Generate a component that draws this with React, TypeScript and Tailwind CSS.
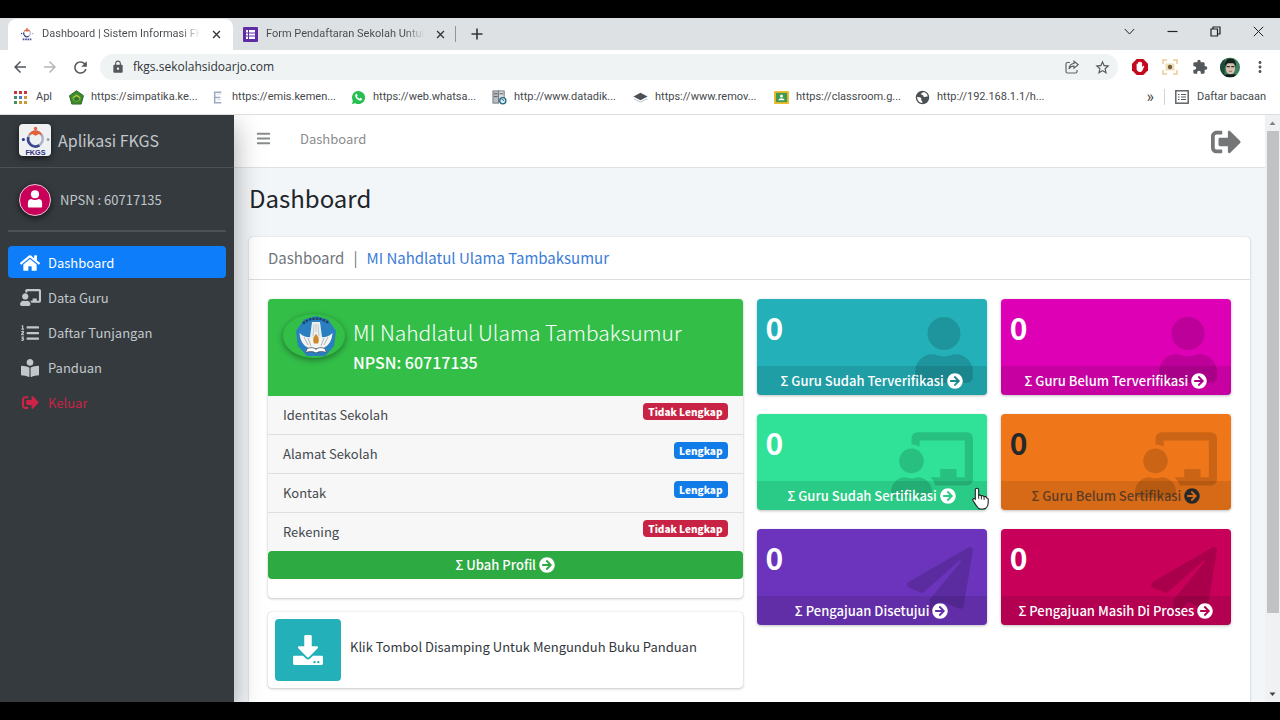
import type { ReactNode } from "react";
import {
  FaArrowCircleRight,
  FaBars,
  FaBookReader,
  FaChalkboardTeacher,
  FaDownload,
  FaHome,
  FaListOl,
  FaPaperPlane,
  FaSignOutAlt,
  FaUser,
} from "react-icons/fa";
import {
  MdArrowBack,
  MdArrowForward,
  MdExtension,
  MdLock,
  MdMoreVert,
  MdRefresh,
  MdStarBorder,
} from "react-icons/md";

/* ---------- drawings ---------- */

function FkgsMark({ className, label = true }: { className: string; label?: boolean }) {
  return (
    <svg viewBox="0 0 32 32" className={className} aria-hidden="true">
      <circle cx="16" cy="14.500" r="7.500" fill="none" stroke="#a9b0c4" strokeWidth="2.400" />
      <path d="M8.600 12.500a7.500 7.500 0 0 0 2 7.500A7.500 7.500 0 0 0 20 21" fill="none" stroke="#3c478f" strokeWidth="2.800" />
      <path d="M8.500 10.500C10.500 7 13 5.400 16 5.400s5.500 1.600 7.500 5.100l-4-1.200L16 11l-3.500-1.700z" fill="#e2603a" />
      <circle cx="16" cy="3.600" r="1.700" fill="#e2603a" />
      <circle cx="3.500" cy="15" r="1.600" fill="#2d3787" />
      <circle cx="29" cy="15" r="1.400" fill="#8d94a8" />
      {label ? (
        <text x="16" y="30.500" textAnchor="middle" fontSize="7.500" fontWeight="700" fontFamily="Liberation Sans, sans-serif" fill="#2b2f7a">
          FKGS
        </text>
      ) : (
        <path d="M6 28h20" stroke="#4a4f9a" strokeWidth="4" strokeDasharray="4 1.500" />
      )}
    </svg>
  );
}

function FormIcon() {
  return (
    <svg viewBox="0 0 15 15" className="size-[15px] shrink-0" aria-hidden="true">
      <rect width="15" height="15" rx="1" fill="#5e2ca5" />
      <rect x="3" y="3" width="9" height="9" fill="#fff" />
      <path d="M3 6h9M3 9h9M5.500 3v9" stroke="#5e2ca5" strokeWidth="1" />
    </svg>
  );
}

function AppsIcon() {
  const colors = ["#c5373b", "#c5373b", "#c5373b", "#3f8f63", "#4a7bd0", "#c99a35", "#3f8f63", "#c99a35", "#c99a35"];
  return (
    <svg viewBox="0 0 13 13" className="size-[13px] shrink-0" aria-hidden="true">
      {colors.map((c, i) => (
        <rect key={i} x={(i % 3) * 5} y={Math.floor(i / 3) * 5} width="3" height="3" fill={c} />
      ))}
    </svg>
  );
}

const favicon = "size-[15px] shrink-0";

function PentagonIcon() {
  return (
    <svg viewBox="0 0 16 16" className={favicon} aria-hidden="true">
      <path d="M8 .8 15.500 6 13 15H3L.5 6z" fill="#3d8a2e" stroke="#276a20" />
      <path d="M8 4.500 12 7.500v3L8 12.500l-4-2v-3z" fill="#a9c23c" />
      <path d="M5 8.500 8 7l3 1.500v2L8 12l-3-1.500z" fill="#2f7a2a" />
    </svg>
  );
}

function EmisIcon() {
  return (
    <svg viewBox="0 0 16 16" className={favicon} aria-hidden="true">
      <path d="M12 2.500H5v11h7M5 8h6" fill="none" stroke="#9aa9bd" strokeWidth="1.600" />
      <path d="M7 4.500h5M7 10.500h5" stroke="#d6dce0" />
    </svg>
  );
}

function WhatsappIcon() {
  return (
    <svg viewBox="0 0 16 16" className={favicon} aria-hidden="true">
      <path d="M8 1a7 7 0 1 1-3.400 13.100L1 15l1-3.500A7 7 0 0 1 8 1z" fill="#25c04f" />
      <path d="M5.300 4.200c.5-.4.900-.3 1.100.1l.6 1.400c.1.300-.5.900-.6 1.200.4 1 1.500 1.900 2.600 2.400.3-.1.900-1 1.200-.9l1.500.8c.4.300-.1 1.400-.6 1.800-.8.600-2 .3-3.300-.4C6 9.600 4.700 7.900 4.400 6.400c-.1-.9.300-1.700.9-2.200z" fill="#fff" />
    </svg>
  );
}

function DatadikIcon() {
  return (
    <svg viewBox="0 0 16 16" className={favicon} aria-hidden="true">
      <rect x="1" y="1" width="6" height="13" fill="#b8bdc1" stroke="#74797e" />
      <rect x="7" y="1" width="6" height="11" fill="#d5d9dc" stroke="#74797e" />
      <path d="M2 4h4M2 7h4M8 4h4" stroke="#555b60" />
      <circle cx="11.500" cy="11.500" r="3.300" fill="#d9f2fb" stroke="#246b86" strokeWidth="1.400" />
      <path d="M10 9.500l3 2" stroke="#1d4f66" />
    </svg>
  );
}

function LayersIcon() {
  return (
    <svg viewBox="0 0 16 16" className={favicon} aria-hidden="true">
      <path d="M8 3 15.500 7 8 11 .5 7z" fill="#4a5055" />
      <path d="M1 9.500 8 13l7-3.500" fill="none" stroke="#b9bec2" />
    </svg>
  );
}

function ClassroomIcon() {
  return (
    <svg viewBox="0 0 16 16" className={favicon} aria-hidden="true">
      <rect y="1" width="16" height="14" rx="1" fill="#eebc2d" />
      <rect x="2" y="3" width="12" height="10" fill="#3f9a4f" />
      <circle cx="8" cy="6.500" r="1.600" fill="#fff" />
      <path d="M4.800 11c0-1.600 1.600-2.300 3.200-2.300s3.200.7 3.200 2.300z" fill="#fff" />
    </svg>
  );
}

function GlobeIcon() {
  return (
    <svg viewBox="0 0 16 16" className={favicon} aria-hidden="true">
      <circle cx="8" cy="8" r="7.200" fill="#4c5054" />
      <path d="M9.500 2.200c-1 .8-2.800.8-3 2.100-.1 1 1.300.7 2 1.200.8.600.2 1.700 1.300 2 1.200.3 1.900-.8 3.900-.5A6 6 0 0 0 9.500 2.200z" fill="#fff" />
      <path d="M2.200 7.500c1.500 0 3.400.2 4.300 1.100.8.900-.3 1.600.2 2.400.4.700 1.500.7 1.200 2.900A6 6 0 0 1 2.200 7.500z" fill="#fff" />
    </svg>
  );
}

function ReadingListIcon() {
  return (
    <svg viewBox="0 0 14 14" className="size-[14px] shrink-0" aria-hidden="true">
      <rect x=".8" y=".8" width="12.400" height="12.400" fill="none" stroke="#55595d" strokeWidth="1.400" />
      <path d="M3 4.500h1.500M3 7h1.500M3 9.500h1.500M6 4.500h5M6 7h5M6 9.500h5" stroke="#55595d" strokeWidth="1.200" />
    </svg>
  );
}

function CloseIcon({ className }: { className: string }) {
  return (
    <svg viewBox="0 0 10 10" className={className} aria-hidden="true">
      <path d="M1.200 1.200l7.600 7.600M8.800 1.200L1.200 8.800" stroke="currentColor" strokeWidth="1.500" />
    </svg>
  );
}

function ShareIcon() {
  return (
    <svg viewBox="0 0 14 14" className="size-[14px]" fill="none" stroke="#5f6368" strokeWidth="1.200" aria-hidden="true">
      <path d="M5 2.500H2.500a1.500 1.500 0 0 0-1.500 1.500v7.500A1.500 1.500 0 0 0 2.500 13h8a1.500 1.500 0 0 0 1.500-1.500V10" />
      <path d="M9 1.200 13.200 4.700 9 8.200V6.200C6.500 6.200 5 7 4 9c.2-3 2-5.300 5-5.700z" />
    </svg>
  );
}

function AdblockIcon() {
  return (
    <svg viewBox="0 0 16 16" className="size-4" aria-hidden="true">
      <path d="M4.700 0h6.600L16 4.700v6.600L11.300 16H4.700L0 11.300V4.700z" fill="#c4091d" />
      <path d="M4.600 8.300V5a.7.700 0 0 1 1.300 0V3.800a.7.700 0 0 1 1.400 0V3.200a.7.700 0 0 1 1.400 0v.8a.7.700 0 0 1 1.400 0v4.200l.9-1.200c.6-.7 1.500-.2 1.200.5l-1.700 3.700C10 12.400 9.200 13 8 13c-2 0-3.400-1.200-3.400-3.200z" fill="#fff" />
    </svg>
  );
}

function CaptureIcon() {
  return (
    <svg viewBox="0 0 16 16" className="size-4" fill="none" aria-hidden="true">
      <path d="M1 5V1h4M11 1h4v4M15 11v4h-4M5 15H1v-4" stroke="#ecca93" strokeWidth="1.500" />
      <rect x="3.500" y="4.500" width="9" height="7" fill="#f0dcb4" />
      <circle cx="8" cy="8" r="2.200" fill="#6f6046" />
    </svg>
  );
}

function ProfilePhoto() {
  return (
    <svg viewBox="0 0 21 21" className="size-[21px]" aria-hidden="true">
      <clipPath id="photo">
        <circle cx="10.500" cy="10.500" r="10.500" />
      </clipPath>
      <g clipPath="url(#photo)">
        <rect width="21" height="21" fill="#3d8060" />
        <path d="M0 0h5v21H0z" fill="#1f4a38" />
        <ellipse cx="11" cy="11.500" rx="4.800" ry="6.500" fill="#d8bfb0" />
        <path d="M5 10C4.500 3 8 .8 11.500 1.200 15 1 17.500 4 16.500 10L15 6H7.500z" fill="#15201c" />
        <path d="M7 9.500h3.300M11.700 9.500H15" stroke="#2b2b2b" strokeWidth="1.400" />
        <path d="M9.500 14.500h3" stroke="#8b5e52" strokeWidth=".9" />
        <path d="M3 21c1-3 3.500-3.500 5-3.500h6c1.500 0 4 .5 5 3.500z" fill="#121c1a" />
      </g>
    </svg>
  );
}

function SchoolEmblem() {
  return (
    <svg viewBox="0 0 42 42" className="size-[42px]" aria-hidden="true">
      <path d="M21 1 33 4.500 41 16 39 31 30 41H12L3 31 1 16 9 4.500z" fill="#2a7fc0" />
      <path d="M8 8.500C15 2 27 2 34 8.500" fill="none" stroke="#1c3f63" strokeWidth="2.400" strokeDasharray="2.500 1" />
      <path d="M17 7h8l2 15-6 4-6-4z" fill="#eceff0" />
      <path d="M19 9.500l-1 12M21 9v8M23 9.500l1 12" stroke="#b9bfc4" strokeWidth=".8" />
      <path d="M4.500 18c4 4 8 4.500 12 4l4.500 4 4.500-4c4 .5 8 0 12-4-.5 7-3 12-9 15H13.500c-6-3-8.500-8-9-15z" fill="#f4f5f3" />
      <path d="M9 22l4 8M13 23l3 8M33 22l-4 8M29 23l-3 8" stroke="#9aa3aa" strokeWidth=".8" />
      <path d="M21 19c3 3.500 3.500 6 2 9.500h-4c-1.500-3.500-1-6 2-9.500z" fill="#c98a2b" />
      <path d="M12 33.500c4-1.500 7-1 9 .8 2-1.800 5-2.300 9-.8l1.500 4c-4-1.300-8-1.200-10.500.6-2.500-1.800-6.500-1.900-10.500-.6z" fill="#fff" stroke="#46535f" strokeWidth=".8" />
    </svg>
  );
}

function HandCursor() {
  return (
    <svg viewBox="0 0 17 23" className="absolute -right-0.5 bottom-0 h-[23px] w-[17px]" aria-hidden="true">
      <path
        d="M5 1.200c1.100 0 1.700.8 1.700 1.800v5.500c.5-.6 2.300-.5 2.700.5.700-.6 2.200-.4 2.600.7.800-.5 2.500-.1 2.700 1.300.9-.1 1.500.5 1.500 1.600v3.200c0 3-1.700 6.200-5.400 6.200H8.500c-2 0-3-1.300-3.900-2.900L1 13.500c-.7-1.500 1-2.600 2.300-1.300V3c0-1 .6-1.800 1.700-1.800z"
        fill="#fff"
        stroke="#222"
        strokeWidth="1.100"
      />
      <path d="M6.700 8v4M9.400 9v3.500M12.100 10v3" stroke="#222" strokeWidth=".9" />
    </svg>
  );
}

/* ---------- browser frame ---------- */

const iconButton = "flex size-5 shrink-0 items-center justify-center";
const tabTitle =
  "min-w-0 flex-1 bg-linear-to-r from-[#45494d] from-88% to-transparent bg-clip-text whitespace-nowrap text-transparent";

function TabStrip() {
  return (
    <div className="flex h-8 shrink-0 items-stretch bg-[#dee1e3] pl-2">
      <div className="mt-px flex w-[225px] shrink-0 items-center gap-2 rounded-t-lg bg-white pr-2 pb-px pl-3">
        <FkgsMark className="size-[14px] shrink-0" label={false} />
        <span className={tabTitle}>Dashboard | Sistem Informasi FKG</span>
        <button aria-label="Tutup tab" className="shrink-0 p-1 text-[#33373a]">
          <CloseIcon className="size-[9px]" />
        </button>
      </div>
      <div className="mt-px flex w-[222px] shrink-0 items-center gap-2 pr-1.5 pb-px pl-2.5">
        <FormIcon />
        <span className={tabTitle}>Form Pendaftaran Sekolah Untuk</span>
        <button aria-label="Tutup tab" className="shrink-0 p-1 text-[#33373a]">
          <CloseIcon className="size-[9px]" />
        </button>
      </div>
      <div className="my-2 w-px bg-[#8f9497]" />
      <button aria-label="Tab baru" className="px-[15px] text-[#33373a]">
        <svg viewBox="0 0 12 12" className="size-3" aria-hidden="true">
          <path d="M6 .5v11M.5 6h11" stroke="currentColor" strokeWidth="1.600" />
        </svg>
      </button>
      <div className="ml-auto flex items-center gap-8 pr-4 pb-1.5 text-[#222]">
        <button aria-label="Cari tab">
          <svg viewBox="0 0 11 11" className="size-[11px]" fill="none" stroke="currentColor" aria-hidden="true">
            <path d="M.8 3 5.500 8 10.200 3" />
          </svg>
        </button>
        <button aria-label="Kecilkan">
          <svg viewBox="0 0 11 11" className="size-[11px]" aria-hidden="true">
            <path d="M.5 5.500h10" stroke="currentColor" strokeWidth="1.200" />
          </svg>
        </button>
        <button aria-label="Pulihkan">
          <svg viewBox="0 0 11 11" className="size-[11px]" fill="none" stroke="currentColor" strokeWidth="1.200" aria-hidden="true">
            <path d="M1 3h6.500v7H1zM3 3V1h7v7H7.500" />
          </svg>
        </button>
        <button aria-label="Tutup jendela">
          <svg viewBox="0 0 11 11" className="size-[11px]" stroke="currentColor" aria-hidden="true">
            <path d="M.8.8l9.400 9.400M10.200.8.8 10.200" />
          </svg>
        </button>
      </div>
    </div>
  );
}

function Toolbar() {
  return (
    <div className="flex h-[33px] shrink-0 items-center bg-white px-2.5 pt-px text-[#54585c]">
      <div className="flex gap-2.5">
        <button aria-label="Kembali" className={iconButton}>
          <MdArrowBack className="size-[18px]" />
        </button>
        <button aria-label="Maju" className={iconButton + " text-[#b4b7ba]"}>
          <MdArrowForward className="size-[18px]" />
        </button>
        <button aria-label="Muat ulang" className={iconButton}>
          <MdRefresh className="size-[19px]" />
        </button>
      </div>
      <div className="ml-2.5 flex h-[26px] flex-1 items-center gap-2 rounded-full bg-[#eff3f4] pr-1.5 pl-[11px]">
        <MdLock className="size-[14px] shrink-0" />
        <input
          aria-label="Alamat"
          className="min-w-0 flex-1 bg-transparent font-['Open_Sans',sans-serif] text-[12px] text-[#303438] outline-none"
          defaultValue="fkgs.sekolahsidoarjo.com"
        />
        <div className="flex gap-2.5">
          <button aria-label="Bagikan" className={iconButton}>
            <ShareIcon />
          </button>
          <button aria-label="Tandai" className={iconButton}>
            <MdStarBorder className="size-[17px]" />
          </button>
        </div>
      </div>
      <div className="ml-3 flex items-center gap-2.5">
        <button aria-label="Adblock" className={iconButton}>
          <AdblockIcon />
        </button>
        <button aria-label="Tangkap layar" className={iconButton}>
          <CaptureIcon />
        </button>
        <button aria-label="Ekstensi" className={iconButton}>
          <MdExtension className="size-4" />
        </button>
        <button aria-label="Profil" className={iconButton}>
          <ProfilePhoto />
        </button>
        <button aria-label="Menu" className={iconButton}>
          <MdMoreVert className="size-[18px]" />
        </button>
      </div>
    </div>
  );
}

const bookmarks: { text: string; icon: ReactNode }[] = [
  { text: "https://simpatika.ke...", icon: <PentagonIcon /> },
  { text: "https://emis.kemen...", icon: <EmisIcon /> },
  { text: "https://web.whatsa...", icon: <WhatsappIcon /> },
  { text: "http://www.datadik...", icon: <DatadikIcon /> },
  { text: "https://www.remov...", icon: <LayersIcon /> },
  { text: "https://classroom.g...", icon: <ClassroomIcon /> },
  { text: "http://192.168.1.1/h...", icon: <GlobeIcon /> },
];

function BookmarkBar() {
  return (
    <nav aria-label="Bookmark" className="flex h-8 shrink-0 items-center border-b border-[#dcdfe1] bg-white px-3.5 pb-[3px] text-[#45494d]">
      <a href="#apps" className="flex w-[55px] shrink-0 items-center gap-[9px]">
        <AppsIcon />
        Apl
      </a>
      {bookmarks.map((b) => (
        <a key={b.text} href="#bookmark" className="flex w-[141px] shrink-0 items-center gap-[7px] whitespace-nowrap">
          {b.icon}
          {b.text}
        </a>
      ))}
      <button aria-label="Bookmark lainnya" className="ml-auto text-base leading-4">
        »
      </button>
      <div className="mx-2.5 h-4 w-px bg-[#d0d3d5]" />
      <a href="#reading" className="flex items-center gap-2 whitespace-nowrap">
        <ReadingListIcon />
        Daftar bacaan
      </a>
    </nav>
  );
}

function Scrollbar() {
  return (
    <div className="flex w-[15px] shrink-0 flex-col items-center bg-[#f0f1f2]" aria-hidden="true">
      <svg viewBox="0 0 15 16" className="h-4 w-[15px]">
        <path d="M4.500 10 7.500 6.500 10.500 10z" fill="#808386" />
      </svg>
      <div className="w-3 flex-[483] bg-[#c1c2c3]" />
      <div className="flex-[73]" />
      <svg viewBox="0 0 15 16" className="h-4 w-[15px]">
        <path d="M4.500 6.500 7.500 10 10.500 6.500z" fill="#404346" />
      </svg>
    </div>
  );
}

/* ---------- application ---------- */

const menu: { text: string; icon: ReactNode; style: string }[] = [
  { text: "Dashboard", icon: <FaHome className="size-5" />, style: "bg-[#0d7dfa] text-white" },
  { text: "Data Guru", icon: <FaChalkboardTeacher className="size-[21px]" />, style: "text-[#c2c7cb]" },
  { text: "Daftar Tunjangan", icon: <FaListOl className="size-[18px]" />, style: "text-[#c2c7cb]" },
  { text: "Panduan", icon: <FaBookReader className="size-[18px]" />, style: "text-[#c2c7cb]" },
  { text: "Keluar", icon: <FaSignOutAlt className="size-[17px]" />, style: "text-[#cb2446]" },
];

function Sidebar() {
  return (
    <aside className="z-10 flex w-[234px] shrink-0 flex-col bg-[#343a3e] text-[#c2c7cb] shadow-[0_10px_26px_rgba(0,0,0,0.35)]">
      <a href="#home" className="flex h-[53px] shrink-0 items-center gap-[7px] border-b border-[#4b5156] pb-0.5 pl-[19px] text-[16px]">
        <span className="flex size-8 items-center justify-center rounded-sm bg-[#eef0f2] shadow-[0_2px_6px_rgba(0,0,0,0.6)]">
          <FkgsMark className="size-[31px]" />
        </span>
        Aplikasi FKGS
      </a>
      <div className="mx-2 flex h-[64px] shrink-0 items-center gap-[9px] border-b-2 border-[#4b5156] pt-px pl-[11px]">
        <span className="flex size-8 items-end justify-center overflow-hidden rounded-full border border-[#ecc6d6] bg-[#c8005a] pb-[7px] shadow-[0_2px_6px_rgba(0,0,0,0.6)]">
          <svg viewBox="0 0 16 19" className="h-[18px] w-4" fill="#fff" aria-hidden="true">
            <circle cx="8" cy="4.500" r="4.300" />
            <path d="M4 9.500c2.500 1.400 5.500 1.400 8 0 2.600.3 3.500 2 3.500 4.500v3.500q0 1-1 1h-13q-1 0-1-1V14c0-2.500.9-4.200 3.500-4.500z" />
          </svg>
        </span>
        <a href="#user">NPSN : 60717135</a>
      </div>
      <nav className="mt-[14px] flex flex-col gap-[3px] px-2">
        {menu.map((m) => (
          <a key={m.text} href="#menu" className={"flex h-8 items-center gap-[7px] rounded pt-px pl-[11px] " + m.style}>
            <span className="flex w-[22px] justify-center">{m.icon}</span>
            {m.text}
          </a>
        ))}
      </nav>
    </aside>
  );
}

const rows = [
  { text: "Identitas Sekolah", done: false },
  { text: "Alamat Sekolah", done: true },
  { text: "Kontak", done: true },
  { text: "Rekening", done: false },
];

function ProfileCard() {
  return (
    <section className="flex flex-col rounded bg-white pb-[19px] shadow-[0_0_1px_rgba(0,0,0,0.25),0_1px_3px_rgba(0,0,0,0.2)]">
      <header className="flex h-[97px] gap-2 rounded-t bg-[#33be48] pt-[15px] pl-[15px] text-white">
        <span className="flex h-[44px] w-[62px] items-center justify-center rounded-[50%] pl-1 shadow-[0_2px_6px_rgba(0,0,0,0.4)]">
          <SchoolEmblem />
        </span>
        <div className="pt-[3px]">
          <h2 className="text-[21px] leading-[30px] font-light">MI Nahdlatul Ulama Tambaksumur</h2>
          <h3 className="text-[16px] leading-[30px] font-medium">NPSN: 60717135</h3>
        </div>
      </header>
      <ul className="bg-[#f7f7f7]">
        {rows.map((r) => (
          <li key={r.text} className="border-b border-[#dfdfdf] last:border-b-0">
            <a href="#profil" className="flex h-[38px] items-start justify-between px-[15px] pt-[7px] text-[#44494e]">
              <span className="leading-6">{r.text}</span>
              <span
                className={
                  "rounded px-[5px] text-[10px] leading-[17px] font-black text-white " + (r.done ? "bg-[#117ce8]" : "bg-[#c82344]")
                }
              >
                {r.done ? "Lengkap" : "Tidak Lengkap"}
              </span>
            </a>
          </li>
        ))}
      </ul>
      <button className="flex h-[28px] items-center justify-center gap-[3px] rounded bg-[#2eaa42] font-medium text-white">
        <span>Σ Ubah Profil</span>
        <FaArrowCircleRight className="size-4" />
      </button>
    </section>
  );
}

function DownloadCard() {
  return (
    <section className="flex items-center gap-[9px] rounded bg-white p-[7px] text-[#33383c] shadow-[0_0_1px_rgba(0,0,0,0.25),0_1px_3px_rgba(0,0,0,0.2)]">
      <button aria-label="Unduh buku panduan" className="flex h-[62px] w-[66px] items-center justify-center rounded bg-[#24b0b8] text-white">
        <FaDownload className="size-[30px]" />
      </button>
      <p className="pb-1.5">Klik Tombol Disamping Untuk Mengunduh Buku Panduan</p>
    </section>
  );
}

const personIcon = <FaUser className="h-[66px] w-[58px]" />;
const teacherIcon = <FaChalkboardTeacher className="h-[66px] w-[82px]" />;
const planeIcon = <FaPaperPlane className="size-[66px]" />;

const stats: { text: string; icon: ReactNode; tone: string; ink: string; foot: string; cursor?: boolean }[] = [
  { text: "Σ Guru Sudah Terverifikasi", icon: personIcon, tone: "bg-[#24b0b8]", ink: "text-white", foot: "text-white" },
  { text: "Σ Guru Belum Terverifikasi", icon: personIcon, tone: "bg-[#dd00b4]", ink: "text-white", foot: "text-white" },
  { text: "Σ Guru Sudah Sertifikasi", icon: teacherIcon, tone: "bg-[#2fe297]", ink: "text-white", foot: "text-white", cursor: true },
  { text: "Σ Guru Belum Sertifikasi", icon: teacherIcon, tone: "bg-[#ef7719]", ink: "text-[#26292c]", foot: "text-[#26292c]/70" },
  { text: "Σ Pengajuan Disetujui", icon: planeIcon, tone: "bg-[#6c34bc]", ink: "text-white", foot: "text-white" },
  { text: "Σ Pengajuan Masih Di Proses", icon: planeIcon, tone: "bg-[#c8005a]", ink: "text-white", foot: "text-white" },
];

function StatBox({ stat }: { stat: (typeof stats)[number] }) {
  return (
    <div className={"relative flex h-24 flex-col justify-between rounded shadow-[0_1px_3px_rgba(0,0,0,0.25)] " + stat.tone + " " + stat.ink}>
      <span className="absolute top-[18px] right-[14px] text-black/15">{stat.icon}</span>
      <strong className="pt-2.5 pl-[9px] text-[30px] leading-9 font-bold">0</strong>
      <a href="#detail" className={"relative flex h-[29px] items-center justify-center gap-[3px] rounded-b bg-black/10 font-medium whitespace-nowrap " + stat.foot}>
        <span>{stat.text}</span>
        <FaArrowCircleRight className={"size-4 " + stat.ink} />
      </a>
      {stat.cursor && <HandCursor />}
    </div>
  );
}

function Content() {
  return (
    <main className="flex min-w-0 flex-1 flex-col bg-[#f3f6f9]">
      <header className="flex h-[53px] shrink-0 items-center border-b border-[#dfe2e5] bg-white pr-6 pl-[22px] text-[#8a8c8e]">
        <button aria-label="Menu" className="pb-1.5">
          <FaBars className="size-[15px]" />
        </button>
        <a href="#dashboard" className="ml-[29px] pb-1">
          Dashboard
        </a>
        <button aria-label="Keluar" className="ml-auto pt-0.5 text-[#747678]">
          <FaSignOutAlt className="size-[30px]" />
        </button>
      </header>
      <h1 className="px-[15px] pt-3 text-[24px] leading-9 text-[#212529]">Dashboard</h1>
      <section className="mx-[15px] mt-[21px] flex-1 rounded-t bg-white shadow-[0_0_1px_rgba(0,0,0,0.25),0_1px_3px_rgba(0,0,0,0.15)]">
        <div className="flex h-[43px] items-center gap-[9px] border-b border-[#dcdfe1] px-[19px] text-[15px] text-[#6f767c]">
          <span>Dashboard</span>
          <span>|</span>
          <a href="#sekolah" className="text-[#3b7dd8]">
            MI Nahdlatul Ulama Tambaksumur
          </a>
        </div>
        <div className="grid grid-cols-2 items-start gap-[14px] px-[19px] pt-[19px]">
          <div className="flex flex-col gap-[14px]">
            <ProfileCard />
            <DownloadCard />
          </div>
          <div className="grid grid-cols-2 gap-x-[14px] gap-y-[19px]">
            {stats.map((s) => (
              <StatBox key={s.text} stat={s} />
            ))}
          </div>
        </div>
      </section>
    </main>
  );
}

export default function App() {
  return (
    <div className="h-screen bg-black py-[18px]">
      <div className="flex h-full flex-col overflow-hidden font-[Roboto,'Open_Sans',sans-serif] text-[11px]">
        <TabStrip />
        <Toolbar />
        <BookmarkBar />
        <div className="flex min-h-0 flex-1 overflow-hidden font-['Noto_Sans_CJK_SC','Noto_Sans',sans-serif] text-[13px]">
          <Sidebar />
          <Content />
          <Scrollbar />
        </div>
      </div>
    </div>
  );
}
